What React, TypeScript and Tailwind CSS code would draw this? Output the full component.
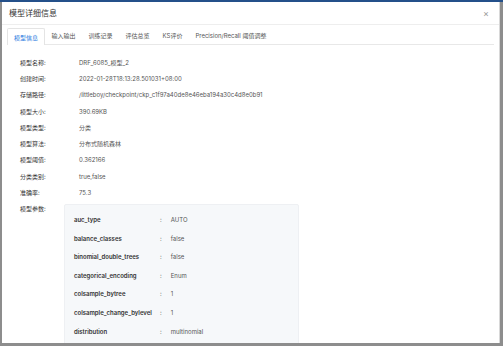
const font = { fontFamily: 'Inter, "Noto Sans CJK SC", sans-serif' };

const tabs = ['模型信息', '输入输出', '训练记录', '评估总览', 'KS评价', 'Precision/Recall 阈值调整'];

const info: [string, string][] = [
  ['模型名称:', 'DRF_6085_模型_2'],
  ['创建时间:', '2022-01-28T18:13:28.501031+08:00'],
  ['存储路径:', '/littleboy/checkpoint/ckp_c1f97a40de8e46eba194a30c4d8e0b91'],
  ['模型大小:', '390.69KB'],
  ['模型类型:', '分类'],
  ['模型算法:', '分布式随机森林'],
  ['模型阈值:', '0.362166'],
  ['分类类别:', 'true,false'],
  ['准确率:', '75.3'],
];

const params: [string, string][] = [
  ['auc_type', 'AUTO'],
  ['balance_classes', 'false'],
  ['binomial_double_trees', 'false'],
  ['categorical_encoding', 'Enum'],
  ['colsample_bytree', '1'],
  ['colsample_change_bylevel', '1'],
  ['distribution', 'multinomial'],
];

export default function App() {
  return (
    <div style={font} className="w-[503px] h-[346px] bg-[#8d8d8d] border-t-2 border-[#24508a] pl-[2px] pr-[3px] pb-[3px] overflow-hidden">
      <div className="h-full bg-white border-r border-[#d8d8d8] flex flex-col overflow-hidden">
        {/* header */}
        <div className="h-[23px] shrink-0 flex items-center justify-between pl-[7px] pr-[10px] border-b border-[#eeeeee]">
          <span className="text-[8px] text-[#333]">模型详细信息</span>
          <span className="text-[9px] leading-none text-[#999]">×</span>
        </div>

        {/* tabs */}
        <div className="mx-[5px] mt-[2px] flex items-end border-b border-[#e8e8e8] shrink-0">
          {tabs.map((t, i) => (
            <div
              key={t}
              className={
                i === 0
                  ? 'h-[17px] px-[6px] flex items-center text-[6px] text-[#1f7ae0] border border-b-0 border-[#e4e4e4] rounded-t-[2px] bg-white -mb-px'
                  : 'h-[17px] px-[6.5px] flex items-center text-[6px] text-[#555]'
              }
            >
              {t}
            </div>
          ))}
        </div>

        {/* content */}
        <div className="pl-[18px] pt-[9px]">
          {info.map(([k, v]) => (
            <div key={k} className="h-[16.3px] flex items-center text-[6px]">
              <span className="w-[59px] shrink-0 text-[#333]">{k}</span>
              <span className="text-[#555] whitespace-nowrap">{v}</span>
            </div>
          ))}
          <div className="flex items-start">
            <span className="w-[44px] shrink-0 h-[16.3px] flex items-center text-[6px] text-[#333]">模型参数:</span>
            <div className="mt-[3.5px] w-[235px] bg-[#f6f8fa] border border-[#eef0f3] rounded-[2px] pl-[9px] pt-[5px] pb-[12px]">
              {params.map(([k, v]) => (
                <div key={k} className="h-[18.6px] flex items-center text-[6px] whitespace-nowrap">
                  <span className="min-w-[80px] font-semibold text-[#333]">{k}</span>
                  <span className="ml-[6px] mr-[9px] text-[#555]">:</span>
                  <span className="text-[#555]">{v}</span>
                </div>
              ))}
            </div>
          </div>
        </div>
      </div>
    </div>
  );
}
